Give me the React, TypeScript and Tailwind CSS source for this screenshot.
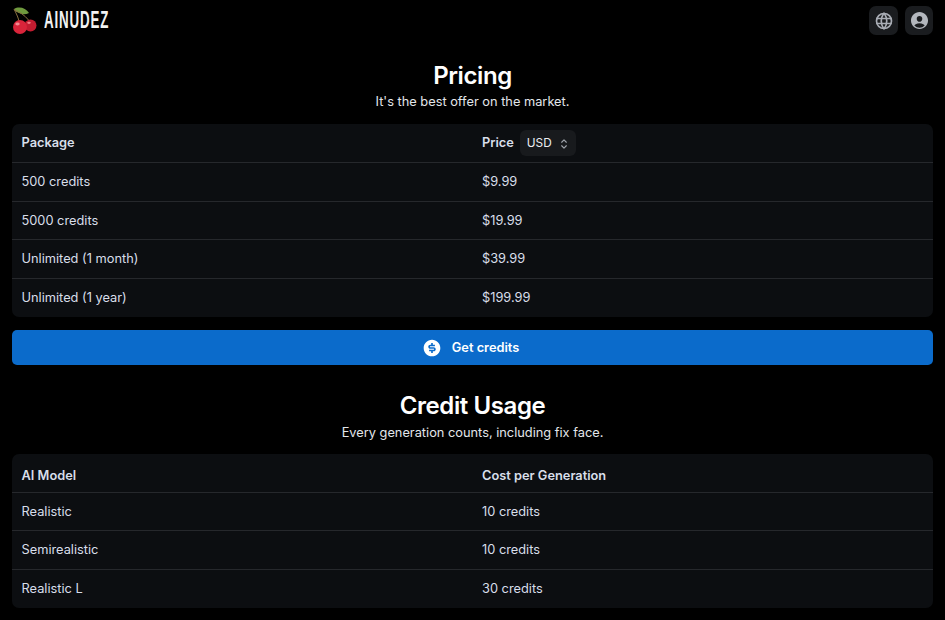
import React from "react";
import { TbWorld, TbSelector } from "react-icons/tb";
import { IoPersonCircle } from "react-icons/io5";
import { RiMoneyDollarCircleFill } from "react-icons/ri";

const packages = [
  { name: "500 credits", price: "$9.99" },
  { name: "5000 credits", price: "$19.99" },
  { name: "Unlimited (1 month)", price: "$39.99" },
  { name: "Unlimited (1 year)", price: "$199.99" },
];

const usage = [
  { name: "Realistic", cost: "10 credits" },
  { name: "Semirealistic", cost: "10 credits" },
  { name: "Realistic L", cost: "30 credits" },
];

function Cherry() {
  return (
    <svg width="27" height="28" viewBox="0 0 27 28" className="shrink-0">
      <path d="M2 2c5 -3 12 -1 15 4c-5 2.500 -12 1 -15 -4z" fill="#6f9a3e" />
      <path d="M2 2c2 4 4 8 5 12M2.500 3c5 2 10 5 14 10" stroke="#8a7040" strokeWidth="1" fill="none" />
      <circle cx="18.500" cy="18.500" r="6" fill="#c21c30" />
      <circle cx="8" cy="20" r="7" fill="#d9243a" />
      <ellipse cx="5.500" cy="17" rx="2.200" ry="1.400" fill="#f58a92" />
      <ellipse cx="17" cy="15.800" rx="1.800" ry="1.100" fill="#ee7a84" />
    </svg>
  );
}

function Row({ left, right, height }: { left: string; right: string; height: string }) {
  return (
    <div className={`grid grid-cols-2 ${height} items-center border-t border-[#26282c] text-[12.8px] text-[#d8deea]`}>
      <div className="pl-[9.5px]">{left}</div>
      <div className="pl-[9.5px]">{right}</div>
    </div>
  );
}

export default function App() {
  return (
    <div className="w-[945px] h-[620px] overflow-hidden bg-black text-white font-['Inter',sans-serif]">
      <header className="flex items-center justify-between h-[41px] pl-[12px] pr-[12px]">
        <div className="flex items-center gap-[5px]">
          <Cherry />
          <span className="block w-[65px] font-['Liberation_Sans',sans-serif] font-bold text-[23px] leading-none whitespace-nowrap origin-left scale-x-[0.58] tracking-[1.5px] text-[#f2f2f2]">
            AINUDEZ
          </span>
        </div>
        <div className="flex items-center gap-[7px]">
          <button className="w-[29px] h-[29px] rounded-[7px] bg-[#1a1c1f] flex items-center justify-center text-[#a9adb5]">
            <TbWorld size={20} />
          </button>
          <button className="w-[28px] h-[29px] rounded-[7px] bg-[#1a1c1f] flex items-center justify-center text-[#b3b7bd]">
            <IoPersonCircle size={21} />
          </button>
        </div>
      </header>

      <main className="px-[12px]">
        <div className="flex flex-col items-center h-[83px]">
          <h1 className="mt-[19px] text-[24px] leading-[32px] font-semibold tracking-[-0.4px]">Pricing</h1>
          <p className="text-[12.8px] leading-[20px] text-[#e3e6ea]">It's the best offer on the market.</p>
        </div>

        <section className="rounded-[7px] bg-[#0c0e11] overflow-hidden pb-[1px]">
          <div className="grid grid-cols-2 h-[38px] items-center text-[12.8px] font-semibold text-[#d8deea]">
            <div className="pl-[9.5px]">Package</div>
            <div className="pl-[9.5px] flex items-center gap-[6px]">
              <span>Price</span>
              <div className="w-[56px] h-[26px] pt-[1px] rounded-[6px] bg-[#181a1d] flex items-center justify-between pl-[7px] pr-[5px] text-[11.8px] font-normal text-[#eceef1]">
                USD
                <TbSelector size={14} className="text-[#9ca1a8]" />
              </div>
            </div>
          </div>
          {packages.map((p) => (
            <Row key={p.name} left={p.name} right={p.price} height="h-[38.5px]" />
          ))}
        </section>

        <button className="mt-[13px] w-full h-[35px] pt-[1px] pr-[4px] rounded-[5px] bg-[#0b6bcb] flex items-center justify-center gap-[10px] text-[12.8px] font-semibold text-white">
          <RiMoneyDollarCircleFill size={20} />
          Get credits
        </button>

        <div className="flex flex-col items-center h-[89px]">
          <h2 className="mt-[25px] text-[24px] leading-[32px] font-semibold tracking-[-0.4px]">Credit Usage</h2>
          <p className="text-[12.8px] leading-[20px] mt-[1px] text-[#e3e6ea]">Every generation counts, including fix face.</p>
        </div>

        <section className="rounded-[7px] bg-[#0c0e11] overflow-hidden pb-[1px]">
          <div className="grid grid-cols-2 h-[38px] pt-[5px] items-center text-[12.8px] font-semibold text-[#d8deea]">
            <div className="pl-[9.5px]">AI Model</div>
            <div className="pl-[9.5px]">Cost per Generation</div>
          </div>
          {usage.map((u) => (
            <Row key={u.name} left={u.name} right={u.cost} height="h-[38.25px]" />
          ))}
        </section>
      </main>
    </div>
  );
}
